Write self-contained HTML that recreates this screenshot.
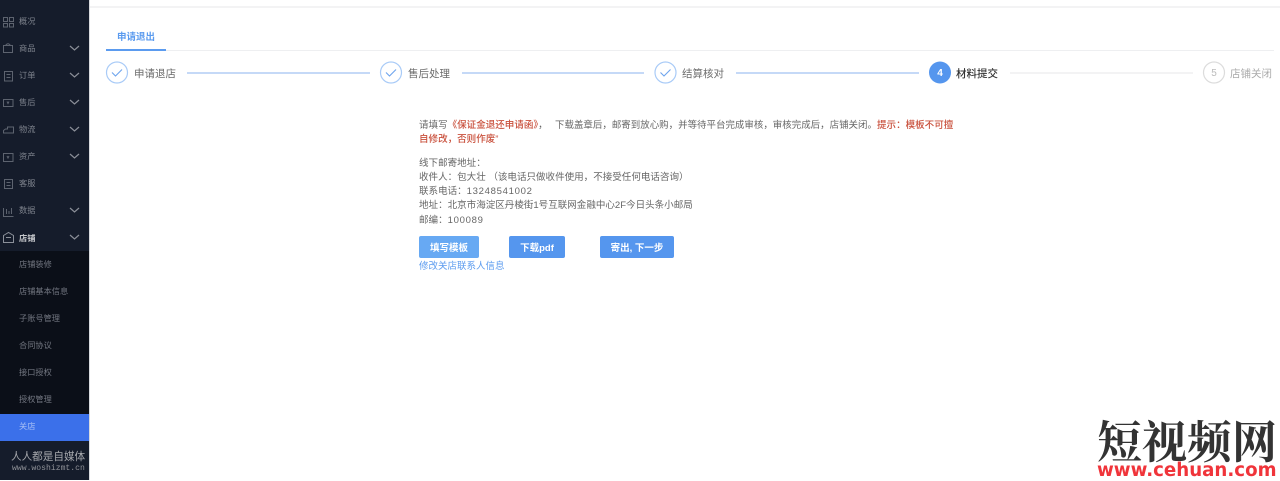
<!DOCTYPE html>
<html><head><meta charset="utf-8">
<style>
html,body{margin:0;padding:0;width:1280px;height:480px;overflow:hidden;background:#fff;font-family:"Liberation Sans","Noto Sans CJK SC",sans-serif}
div,span,a{position:absolute;white-space:nowrap}
b,i{position:static;font-style:normal}
#w{left:0;top:0;width:1280px;height:480px;filter:blur(.35px)}
.side{left:0;top:0;width:89px;height:480px;background:#151c2b}
.sub{left:0;top:251px;width:89px;height:163px;background:#0b0f18}
.act{left:0;top:414px;width:89px;height:27px;background:#3b70ea}
.m{left:19px;font-size:8.200px;line-height:12px;color:#7d828c}
.s{left:19px;font-size:8.200px;line-height:12px;color:#727680}
svg{position:absolute;overflow:visible}
.t{font-size:10.500px;line-height:14px;color:#6b6b6b}
.l{font-size:9.540px;line-height:14px;color:#666;left:419px}
.btn{background:#5596ee;color:#fff;font-size:9.500px;font-weight:bold;text-align:center;border-radius:2px;height:22px;line-height:25px;top:236px}
.line{height:2px;top:72px;background:#c5d9f7}
</style></head><body>
<div id="w">
<div class="side"></div>
<div class="sub"></div>
<div class="act"></div>
<div style="left:89px;top:0;width:1px;height:480px;background:#d8dade"></div>
<div style="left:90px;top:6px;width:1190px;height:2px;background:#f3f3f4"></div>

<svg width="89" height="250" style="left:0;top:0" fill="none" stroke="#5d636f" stroke-width="1">
<rect x="3.500" y="17.500" width="4" height="4"/><rect x="9.500" y="17.500" width="4" height="4"/><rect x="3.500" y="23.500" width="4" height="3.500"/><rect x="9.500" y="23.500" width="4" height="3.500"/>
<path d="M3.500 45.500h9v7h-9zM5.500 45.500q2.500-3.500 5 0"/>
<rect x="4.500" y="71.500" width="8" height="9.500"/><path d="M6.500 74.500h4M6.500 77.500h4"/>
<rect x="3.500" y="99.500" width="9.500" height="7"/><path d="M7 101.500l1 2 1-2"/>
<path d="M3.500 133.500v-3l2-1.500h2v-2h6v6h-10z"/>
<rect x="3.500" y="153.500" width="9.500" height="8"/><path d="M7 156l1 2 1-2"/>
<rect x="4.500" y="179.500" width="8" height="9"/><path d="M6.500 182.500h4M6.500 185.500h4"/>
<path d="M3.500 208v8.500h10M6.500 209v5M9 211v3M11.500 208v6"/>
<path d="M3.500 235.500l5-3 5 3v7h-10zM6 237.500h5" stroke="#8b909a"/>
<g stroke="#8a8e97" stroke-width="1.200">
<path d="M70 46l4.500 4 4.500-4M70 73l4.500 4 4.500-4M70 100l4.500 4 4.500-4M70 127l4.500 4 4.500-4M70 154l4.500 4 4.500-4M70 208l4.500 4 4.500-4M70 235l4.500 4 4.500-4"/>
</g>
</svg>
<div class="m" style="top:16px">概况</div>
<div class="m" style="top:43px">商品</div>
<div class="m" style="top:70px">订单</div>
<div class="m" style="top:97px">售后</div>
<div class="m" style="top:124px">物流</div>
<div class="m" style="top:151px">资产</div>
<div class="m" style="top:178px">客服</div>
<div class="m" style="top:205px">数据</div>
<div class="m" style="top:233px;color:#c6c8cc;font-weight:bold">店铺</div>
<div class="s" style="top:259px">店铺装修</div>
<div class="s" style="top:286px">店铺基本信息</div>
<div class="s" style="top:313px">子账号管理</div>
<div class="s" style="top:340px">合同协议</div>
<div class="s" style="top:367px">接口授权</div>
<div class="s" style="top:394px">授权管理</div>
<div class="s" style="top:421px;color:#a9c1f5">关店</div>
<div style="left:11px;top:450px;font-size:10.600px;line-height:14px;color:#a6a8ad">人人都是自媒体</div>
<div style="left:12px;top:463px;font-size:8.100px;line-height:11px;color:#8f9197;font-family:'Liberation Mono',monospace">www.woshizmt.cn</div>

<div style="left:117px;top:30px;font-size:9.500px;line-height:15px;font-weight:bold;color:#5b9bef">申请退出</div>
<div style="left:106px;top:50px;width:1168px;height:1px;background:#eeeff1"></div>
<div style="left:106px;top:49px;width:60px;height:2px;background:#5b9bef"></div>

<svg width="1280" height="40" style="left:0;top:53px" fill="none">
<g stroke="#a9cbf7" stroke-width="1.200"><circle cx="117" cy="19.500" r="10.500"/><circle cx="391" cy="19.500" r="10.500"/><circle cx="665.500" cy="19.500" r="10.500"/></g>
<g stroke="#6da3ee" stroke-width="1.100"><path d="M112 19.500l3.500 3.500 6.500-6.500M386 19.500l3.500 3.500 6.500-6.500M660.500 19.500l3.500 3.500 6.500-6.500"/></g>
<circle cx="940" cy="19.500" r="11" fill="#5596ee"/>
<circle cx="1214" cy="19.500" r="10.500" stroke="#dcdcdc" stroke-width="1.200"/>
</svg>
<div class="line" style="left:187px;width:183px"></div>
<div class="line" style="left:462px;width:182px"></div>
<div class="line" style="left:736px;width:183px"></div>
<div class="line" style="left:1010px;width:183px;background:#f3f3f4"></div>
<div class="t" style="left:134px;top:67px">申请退店</div>
<div class="t" style="left:408px;top:67px">售后处理</div>
<div class="t" style="left:682px;top:67px">结算核对</div>
<div class="t" style="left:956px;top:67px;color:#333;font-weight:500">材料提交</div>
<div class="t" style="left:1230px;top:67px;color:#aaa">店铺关闭</div>
<div style="left:929px;top:67px;width:22px;text-align:center;font-size:10px;line-height:14px;font-weight:bold;color:#fff">4</div>
<div style="left:1203px;top:67px;width:22px;text-align:center;font-size:10px;line-height:14px;color:#bbb">5</div>

<div class="l" style="top:119px">请填写<b style="color:#c9503c;font-weight:500">《保证金退还申请函》</b>，</div>
<div class="l" style="top:119px;left:555px;font-size:9.470px">下载盖章后，邮寄到放心购，并等待平台完成审核，审核完成后，店铺关闭。</div>
<div class="l" style="top:119px;left:877px;color:#c9503c;font-weight:500">提示：模板不可擅</div>
<div class="l" style="top:133px;color:#c9503c;font-weight:500">自修改，否则作废”</div>
<div class="l" style="top:157px">线下邮寄地址：</div>
<div class="l" style="top:171px">收件人：包大壮 （该电话只做收件使用，不接受任何电话咨询）</div>
<div class="l" style="top:185px">联系电话：<i style="letter-spacing:.7px">13248541002</i></div>
<div class="l" style="top:199px">地址：北京市海淀区丹棱街1号互联网金融中心2F今日头条小邮局</div>
<div class="l" style="top:214px">邮编：<i style="letter-spacing:.7px">100089</i></div>
<div class="btn" style="left:419px;width:60px;background:#67a9f3">填写模板</div>
<div class="btn" style="left:509px;width:56px">下载pdf</div>
<div class="btn" style="left:600px;width:74px">寄出, 下一步</div>
<div style="left:419px;top:260px;font-size:9.500px;line-height:14px;color:#5b9bef">修改关店联系人信息</div>

<div style="left:1097px;top:414px;font-size:45px;line-height:50px;font-weight:bold;color:#333;font-family:'Noto Serif CJK SC','Noto Sans CJK SC',serif">短视频网</div>
<div style="left:1097px;top:462px;font-size:18.200px;line-height:18px;color:#f0343a;font-weight:bold;font-family:'DejaVu Sans',sans-serif">www.cehuan.com</div>
</div>
</body></html>
